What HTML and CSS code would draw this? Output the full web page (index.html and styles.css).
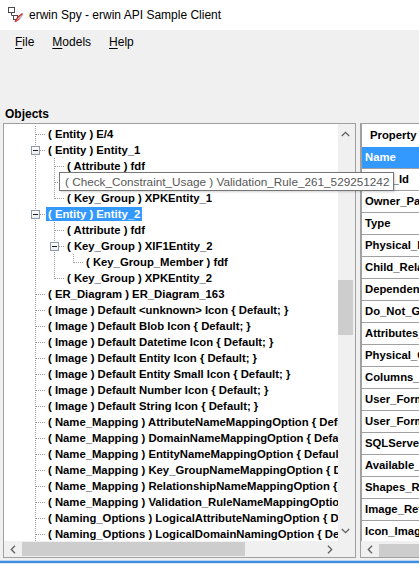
FILE: index.html
```html
<!DOCTYPE html>
<html>
<head>
<meta charset="utf-8">
<title>erwin Spy - erwin API Sample Client</title>
<link rel="stylesheet" href="styles.css">
</head>
<body>
<div class="window">
  <div class="titlebar">
    <svg class="appicon" width="17" height="17" viewBox="0 0 17 17">
      <rect x="1.5" y="0.5" width="6" height="5" fill="#fff" stroke="#4a4a4a"/>
      <path d="M4.5 5.5 V8.5 H7" fill="none" stroke="#4a4a4a"/>
      <rect x="6.5" y="8.5" width="4" height="4" fill="#fff" stroke="#4a4a4a"/>
      <path d="M8 15 L11 10 L15.5 6.5 L16.5 7.5 L13 12.5 Z" fill="#b9b9b9"/>
      <path d="M8 15 L11 10 L15.5 6.5" fill="none" stroke="#d8252b" stroke-width="1.3"/>
      <path d="M9 14.5 L12.5 12" fill="none" stroke="#e03a3a" stroke-width="1"/>
    </svg>
    <span class="title">erwin Spy - erwin API Sample Client</span>
  </div>
  <div class="menubar">
    <span class="menu"><u>F</u>ile</span>
    <span class="menu"><u>M</u>odels</span>
    <span class="menu"><u>H</u>elp</span>
  </div>
  <div class="toolarea"></div>
  <div class="section-label">Objects</div>
  <div class="main">
    <div class="treebox">
      <div class="tree-top">
        <div class="tree-view">
          <div class="row"><span class="g tee"></span><span class="lbl">( Entity ) E/4</span></div>
          <div class="row"><span class="g exp"><span class="box"></span></span><span class="lbl">( Entity ) Entity_1</span></div>
          <div class="row"><span class="g v"></span><span class="g tee"></span><span class="lbl">( Attribute ) fdf</span></div>
          <div class="row"><span class="g v"></span><span class="g tee"></span><span class="lbl">( Check_Constraint_Usage ) Validation_Rule_261_529251242</span></div>
          <div class="row"><span class="g v"></span><span class="g end"></span><span class="lbl">( Key_Group ) XPKEntity_1</span></div>
          <div class="row"><span class="g exp"><span class="box"></span></span><span class="lbl sel">( Entity ) Entity_2</span></div>
          <div class="row"><span class="g v"></span><span class="g tee"></span><span class="lbl">( Attribute ) fdf</span></div>
          <div class="row"><span class="g v"></span><span class="g exp"><span class="box"></span></span><span class="lbl">( Key_Group ) XIF1Entity_2</span></div>
          <div class="row"><span class="g v"></span><span class="g v"></span><span class="g end"></span><span class="lbl">( Key_Group_Member ) fdf</span></div>
          <div class="row"><span class="g v"></span><span class="g end"></span><span class="lbl">( Key_Group ) XPKEntity_2</span></div>
          <div class="row"><span class="g tee"></span><span class="lbl">( ER_Diagram ) ER_Diagram_163</span></div>
          <div class="row"><span class="g tee"></span><span class="lbl">( Image ) Default &lt;unknown&gt; Icon { Default; }</span></div>
          <div class="row"><span class="g tee"></span><span class="lbl">( Image ) Default Blob Icon { Default; }</span></div>
          <div class="row"><span class="g tee"></span><span class="lbl">( Image ) Default Datetime Icon { Default; }</span></div>
          <div class="row"><span class="g tee"></span><span class="lbl">( Image ) Default Entity Icon { Default; }</span></div>
          <div class="row"><span class="g tee"></span><span class="lbl">( Image ) Default Entity Small Icon { Default; }</span></div>
          <div class="row"><span class="g tee"></span><span class="lbl">( Image ) Default Number Icon { Default; }</span></div>
          <div class="row"><span class="g tee"></span><span class="lbl">( Image ) Default String Icon { Default; }</span></div>
          <div class="row"><span class="g tee"></span><span class="lbl">( Name_Mapping ) AttributeNameMappingOption { Default; }</span></div>
          <div class="row"><span class="g tee"></span><span class="lbl">( Name_Mapping ) DomainNameMappingOption { Default; }</span></div>
          <div class="row"><span class="g tee"></span><span class="lbl">( Name_Mapping ) EntityNameMappingOption { Default; }</span></div>
          <div class="row"><span class="g tee"></span><span class="lbl">( Name_Mapping ) Key_GroupNameMappingOption { Default; }</span></div>
          <div class="row"><span class="g tee"></span><span class="lbl">( Name_Mapping ) RelationshipNameMappingOption { Default; }</span></div>
          <div class="row"><span class="g tee"></span><span class="lbl">( Name_Mapping ) Validation_RuleNameMappingOption { Default; }</span></div>
          <div class="row"><span class="g tee"></span><span class="lbl">( Naming_Options ) LogicalAttributeNamingOption { Default; }</span></div>
          <div class="row"><span class="g tee"></span><span class="lbl">( Naming_Options ) LogicalDomainNamingOption { Default; }</span></div>
        </div>
        <div class="vscroll">
          <span class="vbtn vbtn-up"><svg width="9" height="6" viewBox="0 0 9 6"><path d="M0.8 5 L4.5 1.3 L8.2 5" fill="none" stroke="#606060" stroke-width="1.3"/></svg></span>
          <span class="vtrack"><span class="vthumb"></span></span>
          <span class="vbtn vbtn-down"><svg width="9" height="6" viewBox="0 0 9 6"><path d="M0.8 1 L4.5 4.7 L8.2 1" fill="none" stroke="#606060" stroke-width="1.3"/></svg></span>
        </div>
      </div>
      <div class="tree-bottom">
        <div class="hscroll">
          <span class="hbtn"><svg width="6" height="9" viewBox="0 0 6 9"><path d="M5 0.8 L1.3 4.5 L5 8.2" fill="none" stroke="#606060" stroke-width="1.3"/></svg></span>
          <span class="htrack"><span class="hthumb"></span></span>
          <span class="hbtn"><svg width="6" height="9" viewBox="0 0 6 9"><path d="M1 0.8 L4.7 4.5 L1 8.2" fill="none" stroke="#606060" stroke-width="1.3"/></svg></span>
        </div>
        <div class="corner"></div>
      </div>
    </div>
    <div class="gridbox">
      <div class="grid-view">
        <div class="ghead">Property</div>
        <div class="grow sel">Name</div>
        <div class="grow">Long_Id</div>
        <div class="grow">Owner_Path</div>
        <div class="grow">Type</div>
        <div class="grow">Physical_Name</div>
        <div class="grow">Child_Relationships_Ref</div>
        <div class="grow">Dependent_Objects_Ref</div>
        <div class="grow">Do_Not_Generate</div>
        <div class="grow">Attributes_Order_Ref</div>
        <div class="grow">Physical_Columns_Order_Ref</div>
        <div class="grow">Columns_Order_Ref</div>
        <div class="grow">User_Formatted_Name</div>
        <div class="grow">User_Formatted_Physical_Name</div>
        <div class="grow">SQLServer_Storage</div>
        <div class="grow">Available_Index_Types</div>
        <div class="grow">Shapes_Ref</div>
        <div class="grow">Image_Ref</div>
        <div class="grow">Icon_Image_Ref</div>
      </div>
      <div class="ghscroll">
        <span class="hbtn"><svg width="6" height="9" viewBox="0 0 6 9"><path d="M5 0.8 L1.3 4.5 L5 8.2" fill="none" stroke="#606060" stroke-width="1.3"/></svg></span>
        <span class="gthumb"></span>
      </div>
    </div>
    <div class="tooltip">( Check_Constraint_Usage ) Validation_Rule_261_529251242</div>
  </div>
  <div class="statusline"></div>
</div>
</body>
</html>
```
FILE: styles.css
```css
html, body {
  margin: 0;
  padding: 0;
}
body {
  width: 419px;
  height: 564px;
  overflow: hidden;
  background: #f0f0f0;
  font-family: "Liberation Sans", Arial, sans-serif;
  color: #000;
}
.window {
  display: flex;
  flex-direction: column;
  width: 419px;
  height: 564px;
  overflow: hidden;
}
.titlebar {
  height: 30px;
  flex: none;
  background: #fff;
  display: flex;
  align-items: center;
  padding-left: 7px;
  box-sizing: border-box;
}
.appicon {
  flex: none;
  margin-top: 1px;
}
.title {
  margin-left: 5px;
  font-size: 12px;
  color: #000;
}
.menubar {
  height: 23px;
  flex: none;
  display: flex;
  align-items: center;
  padding-left: 6px;
  font-size: 12px;
  background: #f0f0f0;
}
.menu {
  padding: 0 9px;
}
.menu u {
  text-decoration-thickness: 1px;
  text-underline-offset: 2px;
}
.toolarea {
  height: 53px;
  flex: none;
}
.section-label {
  height: 17px;
  line-height: 17px;
  flex: none;
  padding-left: 5px;
  font-weight: bold;
  font-size: 12px;
}
.main {
  position: relative;
  display: flex;
  height: 435px;
  flex: none;
}
.treebox {
  margin-left: 3px;
  width: 353px;
  flex: none;
  box-sizing: border-box;
  border: 1px solid #a0a0a0;
  display: flex;
  flex-direction: column;
  background: #fff;
}
.tree-top {
  display: flex;
  height: 417px;
  flex: none;
}
.tree-view {
  --dotv: repeating-linear-gradient(to bottom, #a0a0a0 0 1px, transparent 1px 2px);
  --doth: repeating-linear-gradient(to right, #a0a0a0 0 1px, transparent 1px 2px);
  width: 334px;
  flex: none;
  overflow: hidden;
  padding-top: 2px;
  box-sizing: border-box;
  background: #fff;
  font-size: 11.3px;
  font-weight: bold;
}
.row {
  display: flex;
  height: 16px;
  padding-left: 22px;
  white-space: nowrap;
}
.g {
  width: 19px;
  height: 16px;
  flex: none;
  background-repeat: no-repeat;
}
.g.v {
  background-image: var(--dotv);
  background-position: 9px 0;
  background-size: 1px 16px;
}
.g.tee,
.g.exp {
  background-image: var(--dotv), var(--doth);
  background-position: 9px 0, 10px 8px;
  background-size: 1px 16px, 9px 1px;
}
.g.end {
  background-image: var(--dotv), var(--doth);
  background-position: 9px 0, 10px 8px;
  background-size: 1px 9px, 9px 1px;
}
.g.exp {
  display: flex;
  align-items: center;
}
.box {
  width: 9px;
  height: 9px;
  margin-left: 5px;
  box-sizing: border-box;
  border: 1px solid #8e9aa8;
  background: linear-gradient(#ffffff, #e9ecef);
  display: flex;
  align-items: center;
  justify-content: center;
}
.box::before {
  content: "";
  width: 5px;
  height: 1px;
  background: #1c1c1c;
}
.lbl {
  margin-left: 1px;
  padding: 0 2px;
  height: 14px;
  line-height: 14px;
  align-self: center;
}
.lbl.sel {
  background: #3399ff;
  color: #fff;
}
.vscroll {
  width: 17px;
  flex: none;
  display: flex;
  flex-direction: column;
  background: #f0f0f0;
}
.vbtn {
  height: 20px;
  flex: none;
  display: flex;
  align-items: center;
  justify-content: center;
  padding-right: 2px;
}
.vtrack {
  flex: 1;
  display: flex;
  flex-direction: column;
}
.vthumb {
  margin-top: 136px;
  width: 15px;
  height: 55px;
  background: #cdcdcd;
}
.tree-bottom {
  display: flex;
  height: 16px;
  flex: none;
}
.hscroll {
  width: 334px;
  flex: none;
  display: flex;
  background: #f0f0f0;
}
.hbtn {
  width: 17px;
  flex: none;
  display: flex;
  align-items: center;
  justify-content: center;
}
.htrack {
  flex: 1;
  display: flex;
  align-items: center;
}
.hthumb {
  margin-left: 1px;
  width: 223px;
  height: 14px;
  background: #cdcdcd;
}
.corner {
  flex: 1;
  background: #f0f0f0;
}
.gridbox {
  margin-left: 4px;
  flex: 1;
  min-width: 0;
  box-sizing: border-box;
  border: 1px solid #a0a0a0;
  border-right: none;
  display: flex;
  flex-direction: column;
  overflow: hidden;
  background: #f0f0f0;
}
.grid-view {
  height: 417px;
  flex: none;
  border-left: 1px solid #a0a0a0;
  overflow: hidden;
  background: #fff;
  font-size: 11.3px;
  font-weight: bold;
  white-space: nowrap;
}
.ghead {
  height: 23px;
  line-height: 23px;
  padding-left: 8px;
  background: #fff;
}
.grow {
  height: 21px;
  line-height: 21px;
  padding-left: 3px;
  border-bottom: 1px solid #a0a0a0;
  background: #fff;
}
.grow.sel {
  background: #3399ff;
  color: #fff;
}
.ghscroll {
  height: 16px;
  flex: none;
  display: flex;
  align-items: center;
  background: #f0f0f0;
}
.ghscroll .hbtn {
  height: 16px;
}
.gthumb {
  flex: 1;
  height: 13px;
  margin-top: 2px;
  margin-left: 1px;
  background: #cdcdcd;
}
.tooltip {
  position: absolute;
  left: 59px;
  top: 49px;
  width: 335px;
  height: 19px;
  box-sizing: border-box;
  border: 1px solid #767676;
  background: #fff;
  color: #575757;
  font-size: 11.75px;
  line-height: 17px;
  padding-left: 5px;
  white-space: nowrap;
  box-shadow: 1px 1px 2px rgba(0, 0, 0, 0.18);
}
.statusline {
  height: 6px;
  flex: none;
  background: linear-gradient(to bottom, #f0f0f0 0 2px, #b9d5f2 2px 3px, #3f8fdc 3px 5px, #dfe9f4 5px 6px);
}
```
